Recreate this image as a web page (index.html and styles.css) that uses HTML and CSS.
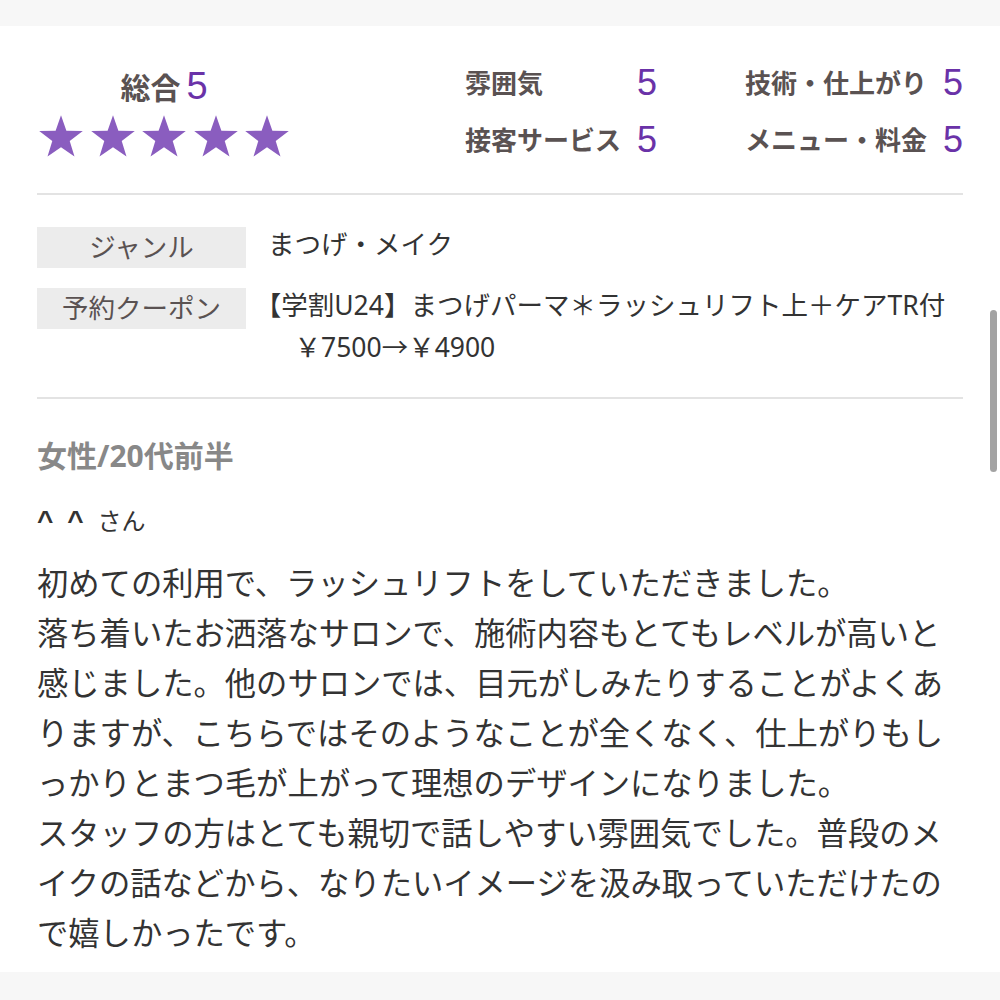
FILE: index.html
```html
<!DOCTYPE html>
<html lang="ja">
<head>
  <meta charset="UTF-8">
  <meta name="viewport" content="width=device-width, initial-scale=1.0">
  <title>口コミ</title>
  <link rel="stylesheet" href="styles.css">
</head>
<body>
  <div class="review">
    <div class="rating">
      <div class="total">
        <div class="total-title">総合<span class="score-big">5</span></div>
        <div class="stars">
          <svg viewBox="2 0 96 91"><path d="M50 0L61.76 33.82 97.55 34.55 69.02 56.18 79.39 90.45 50 70 20.61 90.45 30.98 56.18 2.45 34.55 38.24 33.82Z"/></svg>
          <svg viewBox="2 0 96 91"><path d="M50 0L61.76 33.82 97.55 34.55 69.02 56.18 79.39 90.45 50 70 20.61 90.45 30.98 56.18 2.45 34.55 38.24 33.82Z"/></svg>
          <svg viewBox="2 0 96 91"><path d="M50 0L61.76 33.82 97.55 34.55 69.02 56.18 79.39 90.45 50 70 20.61 90.45 30.98 56.18 2.45 34.55 38.24 33.82Z"/></svg>
          <svg viewBox="2 0 96 91"><path d="M50 0L61.76 33.82 97.55 34.55 69.02 56.18 79.39 90.45 50 70 20.61 90.45 30.98 56.18 2.45 34.55 38.24 33.82Z"/></svg>
          <svg viewBox="2 0 96 91"><path d="M50 0L61.76 33.82 97.55 34.55 69.02 56.18 79.39 90.45 50 70 20.61 90.45 30.98 56.18 2.45 34.55 38.24 33.82Z"/></svg>
        </div>
      </div>
      <div class="scores">
        <div class="score"><span>雰囲気</span><span class="num">5</span></div>
        <div class="score"><span>技術・仕上がり</span><span class="num">5</span></div>
        <div class="score"><span>接客サービス</span><span class="num">5</span></div>
        <div class="score"><span>メニュー・料金</span><span class="num">5</span></div>
      </div>
    </div>

    <div class="info">
      <div class="info-row">
        <div class="info-label">ジャンル</div>
        <div class="info-value">まつげ・メイク</div>
      </div>
      <div class="info-row">
        <div class="info-label">予約クーポン</div>
        <div class="info-value"><span class="open">【</span>学割U24】まつげパーマ＊ラッシュリフト上＋ケアTR付<br>　￥7500→￥4900</div>
      </div>
    </div>

    <div class="reviewer">女性/20代前半</div>
    <div class="name"><b>^ ^</b>さん</div>
    <p class="comment">初めての利用で、ラッシュリフトをしていただきました。<br>落ち着いたお洒落なサロンで、施術内容もとてもレベルが高いと感じました。他のサロンでは、目元がしみたりすることがよくありますが、こちらではそのようなことが全くなく、仕上がりもしっかりとまつ毛が上がって理想のデザインになりました。<br>スタッフの方はとても親切で話しやすい雰囲気でした。普段のメイクの話などから、なりたいイメージを汲み取っていただけたので嬉しかったです。</p>
  </div>
  <div class="scrollbar"></div>
</body>
</html>
```

FILE: styles.css
```css
body {
  margin: 0;
  background: #f7f7f7;
  font-family: "Noto Sans", "Noto Sans CJK JP", sans-serif;
  color: #333;
}
.review {
  background: #fff;
  margin-top: 26px;
  padding: 0 37px 14px;
}
.rating {
  display: flex;
  justify-content: space-between;
  align-items: center;
  padding: 37px 0 33px;
  border-bottom: 2px solid #e3e3e3;
}
.total {
  width: 254px;
  text-align: center;
}
.total-title {
  font-size: 30px;
  font-weight: bold;
  color: #5a5252;
  line-height: 40px;
}
.score-big {
  font-family: "Liberation Sans", Arial, sans-serif;
  font-size: 38px;
  font-weight: normal;
  line-height: 1;
  color: #6a32a8;
  margin-left: 6px;
}
.stars {
  display: flex;
  justify-content: center;
  gap: 7.5px;
  margin-top: 7px;
}
.stars svg {
  display: block;
  width: 44px;
  height: 42px;
  fill: #8a5dbf;
}
.scores {
  display: grid;
  grid-template-columns: auto auto;
  column-gap: 88px;
  row-gap: 17px;
}
.score {
  display: flex;
  justify-content: space-between;
  align-items: center;
  gap: 16px;
  font-size: 26px;
  font-weight: bold;
  color: #5a5252;
  line-height: 40px;
}
.score .num {
  font-family: "Liberation Sans", Arial, sans-serif;
  font-size: 36px;
  font-weight: normal;
  color: #6a32a8;
}
.info {
  display: flex;
  flex-direction: column;
  gap: 16px;
  padding: 28px 0 29px;
  border-bottom: 2px solid #e3e3e3;
}
.info-row {
  display: flex;
  align-items: flex-start;
  gap: 22px;
}
.info-label {
  flex: 0 0 209px;
  margin-top: 4px;
  height: 41px;
  line-height: 41px;
  background: #ececec;
  color: #5a5252;
  text-align: center;
  font-size: 26.5px;
}
.info-value {
  font-size: 26.5px;
  line-height: 42px;
  color: #333;
}
.info-value .open {
  font-feature-settings: "halt";
}
.reviewer {
  margin-top: 37px;
  font-size: 30px;
  font-weight: bold;
  color: #888;
  line-height: 40px;
}
.name {
  margin-top: 27px;
  font-size: 24px;
  line-height: 36px;
}
.name b {
  font-family: "Liberation Sans", Arial, sans-serif;
  font-size: 28px;
  word-spacing: 6px;
  margin-right: 14px;
}
.comment {
  margin: 19px 0 0;
  font-size: 31.3px;
  line-height: 50px;
  line-break: loose;
}
.scrollbar {
  position: fixed;
  right: 3px;
  top: 310px;
  width: 7px;
  height: 162px;
  border-radius: 4px;
  background: #a3a3a3;
}
```
